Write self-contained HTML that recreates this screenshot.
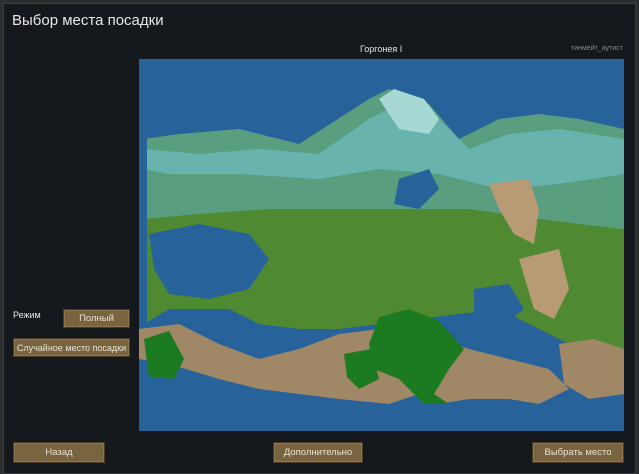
<!DOCTYPE html>
<html><head><meta charset="utf-8"><style>
body{margin:0;width:639px;height:474px;background:#2b2d2f;overflow:hidden;font-family:"Liberation Sans",sans-serif;}
.win{position:absolute;left:3px;top:3px;width:633px;height:471px;background:#15181d;border:1px solid #3a3d42;box-sizing:border-box}
.t{position:absolute;color:#e6e6e6;white-space:nowrap}
.btn{position:absolute;background:#7a6440;border:1px solid #4a3c24;box-shadow:inset 0 0 0 1px #8e7750;color:#e8e2d4;font-size:9.5px;display:flex;align-items:center;justify-content:center;box-sizing:border-box;white-space:nowrap}
</style></head><body>
<div class="win"></div>
<div class="t" style="left:12px;top:12px;font-size:15px">Выбор места посадки</div>
<div class="t" style="left:360px;top:44px;font-size:9px">Горгонея I</div>
<div class="t" style="left:571px;top:45px;font-size:7px;color:#888">тинмейт_аутист</div>
<div class="t" style="left:13px;top:310px;font-size:9px">Режим</div>
<div class="btn" style="left:63px;top:309px;width:67px;height:19px">Полный</div>
<div class="btn" style="left:13px;top:338px;width:117px;height:19px;font-size:9px">Случайное место посадки</div>
<div class="btn" style="left:13px;top:442px;width:92px;height:21px">Назад</div>
<div class="btn" style="left:273px;top:442px;width:90px;height:21px">Дополнительно</div>
<div class="btn" style="left:532px;top:442px;width:92px;height:21px">Выбрать место</div>
<svg style="position:absolute;left:139px;top:59px" width="485" height="372" viewBox="0 0 485 372">
<rect width="485" height="372" fill="#27629a"/>
<path d="M5 150 L60 145 L120 140 L200 140 L270 140 L330 150 L400 160 L485 150 L485 300 L440 290 L400 270 L360 250 L320 255 L280 260 L240 265 L200 270 L160 270 L120 265 L90 250 L30 250 L5 265Z" fill="#4f8a32"/>
<path d="M5 80 L40 75 L100 70 L160 85 L230 40 L250 30 L290 45 L320 80 L360 60 L400 55 L440 60 L485 70 L485 170 L440 165 L400 160 L330 150 L260 150 L200 150 L130 150 L60 155 L5 160Z" fill="#5a9e80"/>
<path d="M5 90 L60 95 L120 90 L180 95 L230 60 L260 45 L300 60 L330 90 L370 75 L420 70 L485 80 L485 115 L420 125 L360 130 L300 115 L240 110 L180 120 L100 115 L30 115 L5 110Z" fill="#69b3ae"/>
<path d="M240 40 L255 30 L285 40 L300 60 L290 75 L260 70Z" fill="#a8d8d4"/>
<path d="M10 175 L60 165 L110 175 L130 200 L110 230 L70 240 L30 235 L15 210Z" fill="#27629a"/>
<path d="M0 0 L8 0 L8 372 L0 372Z" fill="#27629a"/>
<path d="M260 120 L290 110 L300 130 L280 150 L255 145Z" fill="#27629a"/>
<path d="M335 230 L370 225 L385 250 L360 270 L335 260Z" fill="#27629a"/>
<path d="M350 125 L390 120 L400 150 L395 185 L375 175 L360 150Z" fill="#b89a74"/>
<path d="M380 200 L420 190 L430 230 L415 260 L395 250Z" fill="#b89a74"/>
<path d="M0 270 L40 265 L80 285 L120 300 L160 290 L200 275 L240 270 L280 272 L330 290 L370 300 L410 310 L430 330 L400 345 L370 340 L330 340 L300 345 L280 335 L250 345 L200 340 L160 335 L120 330 L80 320 L30 305 L0 300Z" fill="#a08766"/>
<path d="M420 285 L455 280 L485 290 L485 335 L450 340 L425 325Z" fill="#a08766"/>
<path d="M5 280 L30 272 L45 300 L35 320 L10 318Z" fill="#1c7a20"/>
<path d="M240 258 L270 250 L300 262 L325 290 L310 310 L295 335 L310 345 L285 345 L260 320 L235 310 L230 285Z" fill="#1c7a20"/>
<path d="M205 295 L232 290 L240 320 L220 330 L208 318Z" fill="#1c7a20"/>
</svg>
</body></html>
